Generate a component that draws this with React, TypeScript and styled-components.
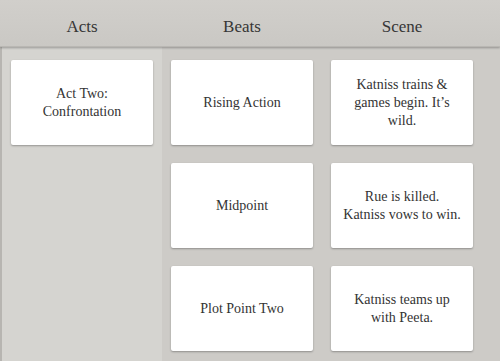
import React from "react";
import styled, { createGlobalStyle } from "styled-components";

const GlobalStyle = createGlobalStyle`
  html, body {
    margin: 0;
    padding: 0;
    background: #cdcbc7;
    font-family: "Liberation Serif", "DejaVu Serif", serif;
    color: #3a3a3a;
  }
`;

export const Board = styled.div`
  width: 500px;
  height: 361px;
  display: flex;
  flex-direction: column;
  overflow: hidden;
  background: #cdcbc7;
`;

export const HeaderBar = styled.div`
  height: 47px;
  flex-shrink: 0;
  display: flex;
  padding: 8px 0 0 2px;
  box-sizing: border-box;
  background: linear-gradient(#d1cfcb, #cac8c4);
  box-shadow: 0 1px 2px rgba(0, 0, 0, 0.28);
  border-bottom: 1px solid #b9b7b3;
  position: relative;
  z-index: 1;
`;

export const HeaderCell = styled.div`
  width: 160px;
  display: flex;
  align-items: center;
  justify-content: center;
  font-size: 17px;
  color: #363636;
`;

export const Columns = styled.div`
  flex: 1;
  display: flex;
  border-left: 2px solid #b7b5b1;
`;

export const Column = styled.div<{ $light?: boolean }>`
  width: 160px;
  display: flex;
  flex-direction: column;
  gap: 18px;
  padding: 13px 9px 0;
  box-sizing: border-box;
  background: ${(p) => (p.$light ? "#d5d4d0" : "transparent")};
`;

export const Card = styled.div`
  height: 85px;
  background: #fff;
  border-radius: 2px;
  box-shadow: 0 1px 2px rgba(0, 0, 0, 0.3);
  display: flex;
  align-items: center;
  justify-content: center;
  text-align: center;
  padding: 0 12px;
  font-size: 14px;
  line-height: 18px;
  color: #333;
`;

const acts = ["Act Two: Confrontation"];
const beats = ["Rising Action", "Midpoint", "Plot Point Two"];
const scenes = [
  "Katniss trains & games begin. It\u2019s wild.",
  "Rue is killed. Katniss vows to win.",
  "Katniss teams up with Peeta.",
];

export default function App() {
  return (
    <Board>
      <GlobalStyle />
      <HeaderBar>
        <HeaderCell>Acts</HeaderCell>
        <HeaderCell>Beats</HeaderCell>
        <HeaderCell>Scene</HeaderCell>
      </HeaderBar>
      <Columns>
        <Column $light>
          {acts.map((a) => (
            <Card key={a}>{a}</Card>
          ))}
        </Column>
        <Column>
          {beats.map((b) => (
            <Card key={b}>{b}</Card>
          ))}
        </Column>
        <Column>
          {scenes.map((s) => (
            <Card key={s}>{s}</Card>
          ))}
        </Column>
      </Columns>
    </Board>
  );
}
